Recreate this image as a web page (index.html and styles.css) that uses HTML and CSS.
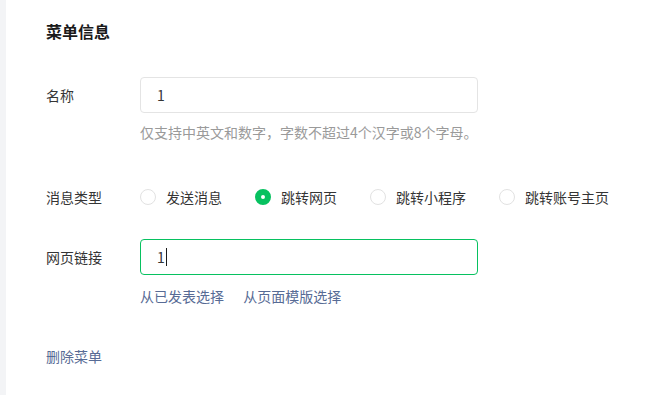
FILE: index.html
```html
<!DOCTYPE html>
<html lang="zh-CN">
<head>
    <meta charset="UTF-8">
    <meta name="viewport" content="width=device-width, initial-scale=1.0">
    <title>菜单信息</title>
    <link rel="stylesheet" href="styles.css">
</head>
<body>
    <div class="side"></div>
    <div class="panel">
        <h2 class="title">菜单信息</h2>

        <div class="row row-name">
            <label class="label" for="menuName">名称</label>
            <div class="field">
                <input class="input" type="text" id="menuName" value="1">
                <p class="hint">仅支持中英文和数字，字数不超过4个汉字或8个字母。</p>
            </div>
        </div>

        <div class="row row-type">
            <span class="label">消息类型</span>
            <div class="radios">
                <label class="radio"><span class="dot"></span>发送消息</label>
                <label class="radio checked"><span class="dot"></span>跳转网页</label>
                <label class="radio"><span class="dot"></span>跳转小程序</label>
                <label class="radio"><span class="dot"></span>跳转账号主页</label>
            </div>
        </div>

        <div class="row row-link">
            <label class="label" for="pageUrl">网页链接</label>
            <div class="field">
                <div class="input focus">1<span class="caret"></span></div>
                <div class="links">
                    <a href="#">从已发表选择</a>
                    <a href="#">从页面模版选择</a>
                </div>
            </div>
        </div>

        <a class="delete" href="#">删除菜单</a>
    </div>
</body>
</html>
```

FILE: styles.css
```css
body {
    margin: 0;
    display: flex;
    min-height: 100vh;
    font-family: "Noto Sans CJK SC", "Noto Sans", sans-serif;
    font-size: 14px;
    color: #353535;
    background-color: #fff;
}

.side {
    width: 6px;
    background-color: #f3f4f6;
}

.panel {
    flex: 1;
    padding: 19px 0 0 40px;
}

.title {
    margin: 0;
    font-size: 16px;
    line-height: 24px;
    font-weight: bold;
    color: #1a1a1a;
}

.row {
    display: flex;
    align-items: flex-start;
}

.label {
    width: 94px;
    flex-shrink: 0;
    line-height: 36px;
    color: #353535;
}

.field {
    width: 338px;
}

.row-name {
    margin-top: 34px;
}

.input {
    box-sizing: border-box;
    display: flex;
    align-items: center;
    width: 338px;
    height: 36px;
    padding: 0 16px;
    border: 1px solid #e4e4e4;
    border-radius: 4px;
    font-family: inherit;
    font-size: 14px;
    color: #353535;
    outline: none;
}

.input.focus {
    border-color: #07c160;
}

.caret {
    display: inline-block;
    width: 1px;
    height: 18px;
    margin-left: 1px;
    background-color: #1a1a1a;
}

.hint {
    margin: 9px 0 0;
    line-height: 20px;
    color: #9a9a9a;
}

.row-type {
    margin-top: 37px;
}

.radios {
    display: flex;
    align-items: center;
    height: 36px;
}

.radio {
    display: flex;
    align-items: center;
    margin-right: 33px;
    color: #353535;
}

.dot {
    box-sizing: border-box;
    width: 16px;
    height: 16px;
    margin-right: 10px;
    border: 1px solid #e2e2e2;
    border-radius: 50%;
}

.radio.checked .dot {
    border: 6px solid #07c160;
    background-color: #fff;
}

.row-link {
    margin-top: 24px;
}

.links {
    margin-top: 11px;
    line-height: 20px;
}

.links a {
    color: #576b95;
    text-decoration: none;
    margin-right: 16px;
}

.delete {
    display: inline-block;
    margin-top: 40px;
    line-height: 20px;
    color: #576b95;
    text-decoration: none;
}
```
